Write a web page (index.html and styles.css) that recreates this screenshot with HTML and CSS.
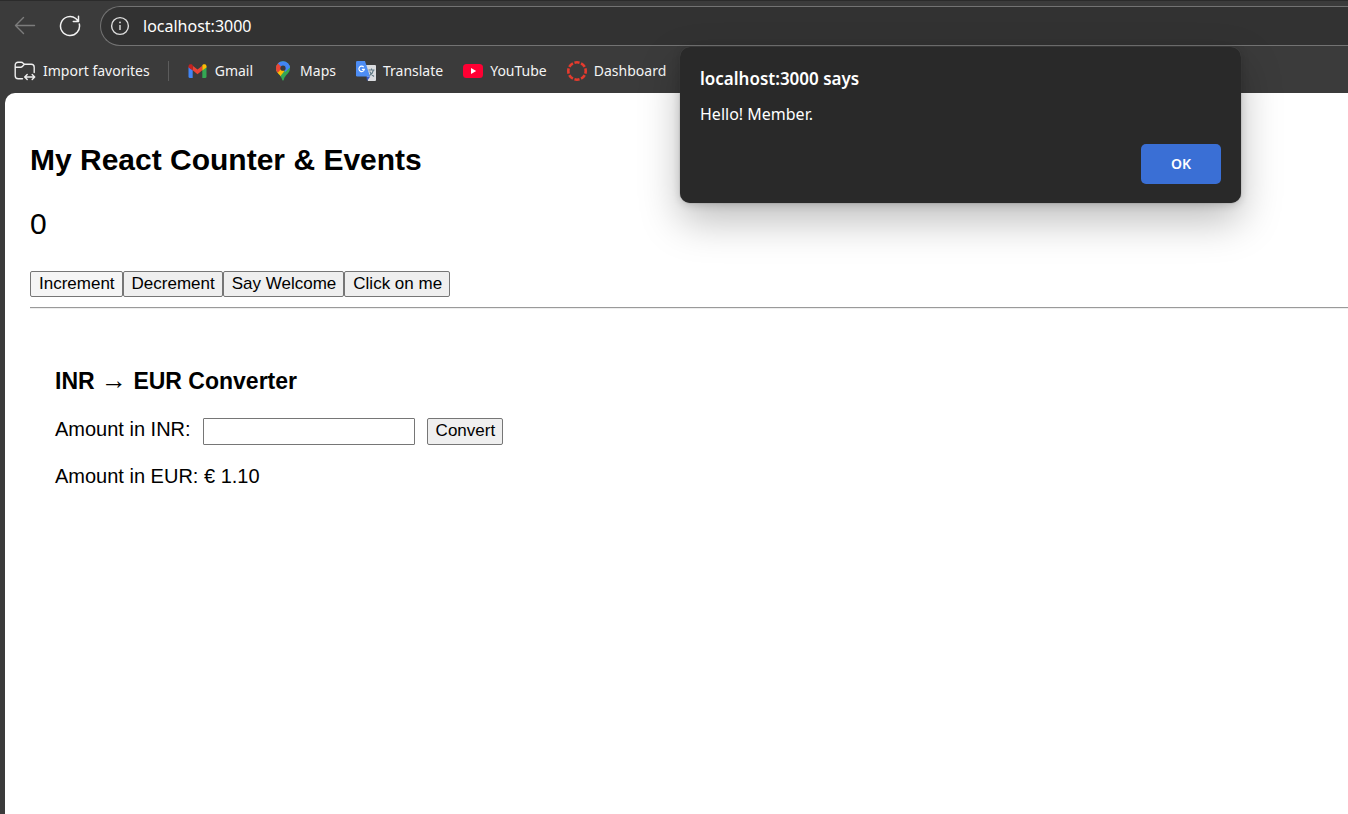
FILE: index.html
```html
<!DOCTYPE html>
<html lang="en">
<head>
<meta charset="utf-8">
<title>localhost:3000</title>
<link rel="stylesheet" href="styles.css">
</head>
<body>
<header class="chrome">
  <div class="toolbar">
    <button class="icon-button back" type="button" aria-label="Back">
      <svg width="22" height="20" viewBox="0 0 22 20" fill="none" stroke="#7c7c7c" stroke-width="1.4" stroke-linecap="round" stroke-linejoin="round"><path d="M20.500 9.500H1.500M9.500 1.500L1.500 9.500L9.500 17.500"/></svg>
    </button>
    <button class="icon-button" type="button" aria-label="Refresh">
      <svg width="22" height="22" viewBox="0 0 22 22" fill="none" stroke="#f2f2f2" stroke-width="1.5" stroke-linecap="round" stroke-linejoin="round"><path d="M20.300 9A9.500 9.500 0 1 1 16.800 3.500L19.500 6.500M19.500 1.300V6.500H14.300"/></svg>
    </button>
    <label class="address">
      <svg width="20" height="20" viewBox="0 0 20 20" fill="none" stroke="#dedede" stroke-width="1.4"><circle cx="10" cy="10" r="8.400"/><path d="M10 9v5"/><circle cx="10" cy="6.400" r=".9" fill="#dedede" stroke="none"/></svg>
      <input class="address-input" type="text" value="localhost:3000" aria-label="Address">
    </label>
  </div>
  <nav class="favorites">
    <a class="favorite" href="#">
      <svg width="22" height="20" viewBox="0 0 22 20" fill="none" stroke="#eee" stroke-width="1.4" stroke-linecap="round" stroke-linejoin="round"><path d="M8.500 17.800H4.200A3 3 0 0 1 1.200 14.800V4A2.800 2.800 0 0 1 4 1.200H7.200Q8.300 1.200 9.200 2.200L10.400 3.300H17.200A3 3 0 0 1 20.200 6.300V11.500M1.400 6.200H6.600Q7.700 6.200 8.600 5.200L10.400 3.300M10.800 16H20.600M13.200 13.500L10.700 16L13.200 18.500M18.200 13.500L20.700 16L18.200 18.500"/></svg>
      <span>Import favorites</span>
    </a>
    <span class="divider"></span>
    <a class="favorite" href="#">
      <svg width="20" height="20" viewBox="0 0 20 20"><path d="M.5 6l4.200 3v8H2Q.5 17 .5 15.500z" fill="#4285f4"/><path d="M14.300 9l4.200-3v9.500Q18.500 17 17 17h-2.700z" fill="#34a853"/><path d="M4.700 4.800l4.800 3.800 4.800-3.800V9.200l-4.800 4L4.700 9.200z" fill="#ea4335"/><path d="M.5 5.300C.5 3 2.900 2.700 4 3.600L4.700 4.200V9.400L.5 6.400z" fill="#c5221f"/><path d="M18.500 5.300C18.500 3 16.100 2.700 15 3.600L14.300 4.200V9.400l4.200-3z" fill="#fbbc04"/></svg>
      <span>Gmail</span>
    </a>
    <a class="favorite" href="#">
      <svg width="20" height="20" viewBox="0 0 20 20"><defs><clipPath id="pin"><path d="M10 .3a7 7 0 0 1 7 7c0 5-4.900 6.200-6.200 11.400q-.8 1.800-1.600 0C8 13.600 3 12.200 3 7.300a7 7 0 0 1 7-7z"/></clipPath></defs><g clip-path="url(#pin)"><path d="M0 0h20v20H0z" fill="#34a853"/><path d="M1 11.500L8 4l5 4-7 9z" fill="#fbbc04"/><path d="M1 10.500V1h6l3 5-5.500 6z" fill="#ea4335"/><path d="M4.800 2.200L9 6.500 15.800 2.500 12-1H6z" fill="#4285f4"/><path d="M10 7.200l5-6.200 3 4.500-6 5.500z" fill="#4285f4"/></g><circle cx="10" cy="7.200" r="2.600" fill="#3b3b3b"/></svg>
      <span>Maps</span>
    </a>
    <a class="favorite" href="#">
      <svg width="20" height="20" viewBox="0 0 20 20"><path d="M8 4h11q1 0 1 1v14q0 1-1 1h-7z" fill="#dadcdf"/><path d="M10.500 15.500h3.800L11 20z" fill="#3659c7"/><path d="M1.300 0H9l5 15.500H1.300Q0 15.500 0 14.200V1.300Q0 0 1.300 0z" fill="#4d8df5"/><path d="M12.500 9h6M15.500 7.600V9M17.500 9q-1 4-4 5.500M13.700 10.500q1.400 3 4.300 5" fill="none" stroke="#607985" stroke-width="1.100"/><path d="M7.700 6.100A2.700 2.700 0 1 0 8.300 8.300H5.900" fill="none" stroke="#fff" stroke-width="1.200"/></svg>
      <span>Translate</span>
    </a>
    <a class="favorite" href="#">
      <svg width="20" height="20" viewBox="0 0 20 20"><rect y="3" width="20" height="14" rx="3.500" fill="#ff0033"/><path d="M8 7l5.200 3L8 13z" fill="#fff"/></svg>
      <span>YouTube</span>
    </a>
    <a class="favorite" href="#">
      <svg width="20" height="20" viewBox="0 0 20 20" fill="none"><circle cx="10" cy="10" r="8.700" stroke="#e53b2e" stroke-width="2.600" pathLength="80" stroke-dasharray="7.600 2.400" stroke-dashoffset="3.800"/></svg>
      <span>Dashboard</span>
    </a>
  </nav>
</header>
<main class="page">
  <h2 class="title">My React Counter &amp; Events</h2>
  <p class="count">0</p>
  <div class="actions">
    <button class="button hovered" type="button">Increment</button><button class="button" type="button">Decrement</button><button class="button" type="button">Say Welcome</button><button class="button" type="button">Click on me</button>
  </div>
  <hr class="rule">
  <section class="converter">
    <h3 class="subtitle">INR <span class="arrow">→</span> EUR Converter</h3>
    <div class="form-row">
      <label for="amount">Amount in INR:</label>
      <input class="amount" id="amount" type="text">
      <button class="button" type="button">Convert</button>
    </div>
    <p class="result">Amount in EUR: € 1.10</p>
  </section>
</main>
<div class="dialog" role="alertdialog" aria-labelledby="dialog-title">
  <h1 class="dialog-title" id="dialog-title">localhost:3000 says</h1>
  <p class="dialog-text">Hello! Member.</p>
  <button class="ok" type="button">OK</button>
</div>
</body>
</html>
```
FILE: styles.css
```css
* { box-sizing: border-box; }
body {
  margin: 0;
  min-height: 100vh;
  display: flex;
  flex-direction: column;
  background: #3b3b3b;
  color: #000;
  font-family: "Liberation Sans", Arial, sans-serif;
  overflow-x: hidden;
}
svg { display: block; flex: none; }
.chrome {
  border-top: 1px solid #2b2b2b;
  font-family: "Noto Sans", sans-serif;
  color: #f4f4f4;
}
.toolbar {
  display: flex;
  align-items: center;
  gap: 23px;
  padding: 5px 0 0 14px;
}
.icon-button {
  display: flex;
  padding: 0;
  border: 0;
  background: none;
}
.address {
  flex: 1;
  display: flex;
  align-items: center;
  gap: 13px;
  height: 40px;
  margin-left: -4px;
  padding-left: 9px;
  border: 1px solid #737373;
  border-right: 0;
  border-radius: 20px 0 0 20px;
  background: #323232;
}
.address-input {
  flex: 1;
  padding: 0 0 1px;
  border: 0;
  outline: 0;
  background: none;
  color: #fff;
  font: 16px "Noto Sans", sans-serif;
}
.favorites {
  display: flex;
  align-items: center;
  gap: 20px;
  height: 47px;
  padding: 2px 0 0 14px;
}
.favorite {
  display: flex;
  align-items: center;
  gap: 7px;
  color: inherit;
  font-size: 14px;
  line-height: 20px;
  text-decoration: none;
  white-space: nowrap;
}
.divider {
  width: 1px;
  height: 20px;
  margin: 0 -1px 0 -2px;
  background: #5c5c5c;
}
.page {
  flex: 1;
  margin-left: 5px;
  padding: 25px 0 0 25px;
  border-radius: 10px 0 0 0;
  background: #fff;
}
.title {
  margin: 25px 0 30px;
  font-size: 30px;
  line-height: 34px;
}
.count {
  margin: 0 0 30px;
  font-size: 30px;
  line-height: 34px;
}
.actions { display: flex; }
.button {
  min-height: 26px;
  padding: 0 7px 1px 8px;
  border: 1px solid #767676;
  border-radius: 2px;
  background: #efefef;
  color: #000;
  font: 17px "Liberation Sans", Arial, sans-serif;
  line-height: 20px;
}
.hovered { background: #f5f5f5; }
.rule {
  margin: 10px 0;
  border: 0;
  border-top: 1px solid #9a9a9a;
  border-bottom: 1px solid #eee;
}
.converter { padding: 25px; }
.subtitle {
  margin: 24px 0;
  font-size: 23px;
  line-height: 26px;
}
.arrow {
  font-family: "Liberation Serif", serif;
  font-size: 26px;
  font-weight: 400;
  line-height: 20px;
}
.form-row {
  display: flex;
  gap: 12px;
  font-size: 20px;
  line-height: 22px;
}
.amount {
  width: 212px;
  height: 27px;
  border: 1px solid #767676;
  border-radius: 1px;
  font: 17px "Liberation Sans", Arial, sans-serif;
}
.result {
  margin: 19px 0;
  font-size: 20px;
  line-height: 24px;
}
.dialog {
  position: absolute;
  top: 47px;
  left: 680px;
  display: flex;
  flex-direction: column;
  width: 561px;
  padding: 20px 20px 19px;
  border-radius: 10px;
  background: #292929;
  box-shadow: 0 0 1px #555, 0 18px 40px rgba(0, 0, 0, .26), 0 2px 8px rgba(0, 0, 0, .16);
  color: #fff;
  font-family: "Noto Sans", sans-serif;
}
.dialog-title {
  margin: 0 0 11px;
  font-size: 17px;
  font-weight: 600;
  line-height: 24px;
}
.dialog-text {
  margin: 0 0 18px;
  font-size: 16px;
  line-height: 24px;
}
.ok {
  align-self: flex-end;
  width: 80px;
  height: 40px;
  padding: 0 0 2px;
  border: 0;
  border-radius: 5px;
  background: #3a6fd5;
  color: #fff;
  font: 600 14px "Noto Sans", sans-serif;
}
```
